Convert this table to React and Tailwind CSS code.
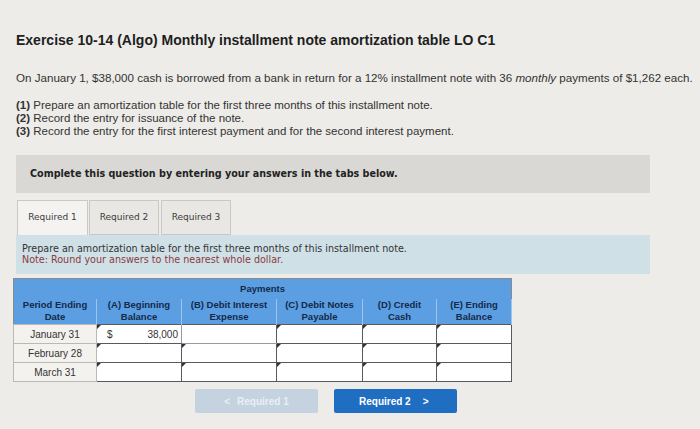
const HEAD = ['(A) Beginning|Balance', '(B) Debit Interest|Expense', '(C) Debit Notes|Payable', '(D) Credit|Cash', '(E) Ending|Balance'];
const WIDTHS = ['w-[85px]', 'w-[95px]', 'w-[86px]', 'w-[74px]', 'w-[75px]'];
const ROWS = ['January 31', 'February 28', 'March 31'];

function Marker() {
  return <span className="absolute top-0 left-0 w-0 h-0 border-t-[4px] border-r-[4px] border-t-[#2b3440] border-r-transparent" />;
}

function InputCell({ row, col }) {
  const first = row === 0 && col === 0;
  const focus = row === 0 && col === 1;
  return (
    <td className={`relative bg-white border-[1.5px] border-[#5a5a5a] p-0 ${focus ? 'border-b-[#9a9a9a] border-b-dotted' : ''} ${first ? 'border-r-dotted border-r-[#9a9a9a]' : ''}`}>
      {!focus && <Marker />}
      {first && (
        <div className="flex justify-between items-center px-[10px] pr-[3px] text-[10px] text-[#333]">
          <span>$</span>
          <span>38,000</span>
        </div>
      )}
    </td>
  );
}

export default function App() {
  return (
    <div className="w-[700px] h-[429px] overflow-hidden bg-[#edece8] font-['Liberation_Sans',Arial,sans-serif] text-[#2a2a2a]">
      <div className="pl-[16px] pt-[31px]">
        <h1 className="text-[14px] leading-[18px] font-bold text-[#1e1e1e]">
          Exercise 10-14 (Algo) Monthly installment note amortization table LO C1
        </h1>
        <p className="mt-[22px] text-[11.6px] leading-[14px] text-[#333]">
          On January 1, $38,000 cash is borrowed from a bank in return for a 12% installment note with 36 <i>monthly</i> payments of $1,262 each.
        </p>
        <div className="mt-[14px] text-[11.5px] leading-[13px] text-[#333]">
          <p><b>(1)</b> Prepare an amortization table for the first three months of this installment note.</p>
          <p><b>(2)</b> Record the entry for issuance of the note.</p>
          <p><b>(3)</b> Record the entry for the first interest payment and for the second interest payment.</p>
        </div>
      </div>

      <div className="ml-[16px] w-[634px] mt-[17px] h-[38px] bg-[#d9d8d5] flex items-center pl-[14px] font-['DejaVu_Sans',sans-serif] font-bold text-[9.6px] text-[#222]">
        Complete this question by entering your answers in the tabs below.
      </div>

      <div className="ml-[17px] mt-[7px] flex gap-[1px] font-['DejaVu_Sans',sans-serif] text-[9px] text-[#3a3a3a]">
        <div className="w-[71px] h-[35px] bg-[#f4f3f1] border border-b-0 border-[#c9c8c5] flex items-center justify-center">Required 1</div>
        <div className="w-[70px] h-[35px] bg-[#e8e7e4] border border-[#c9c8c5] flex items-center justify-center">Required 2</div>
        <div className="ml-[1px] w-[70px] h-[35px] bg-[#e8e7e4] border border-[#c9c8c5] flex items-center justify-center">Required 3</div>
      </div>

      <div className="ml-[16px] w-[634px] h-[39px] bg-[#d0e0e7] pl-[6px] pt-[8px] font-['DejaVu_Sans',sans-serif] text-[9.6px] leading-[11px]">
        <p className="text-[#333]">Prepare an amortization table for the first three months of this installment note.</p>
        <p className="text-[#8a3c3c]">Note: Round your answers to the nearest whole dollar.</p>
      </div>

      <table className="ml-[13px] mt-[4px] border-collapse table-fixed border border-[#8a8a8a]">
        <thead>
          <tr className="bg-[#5b9ee1]">
            <th colSpan={6} className="h-[20px] p-0 text-[9.5px] font-bold text-[#15294a] text-center">Payments</th>
          </tr>
          <tr className="bg-[#5b9ee1]">
            <th className="w-[83px] h-[26px] p-0 text-[9.5px] leading-[12px] font-bold text-[#15294a] border-r border-[#9cc4ec]">Period Ending<br />Date</th>
            {HEAD.map((h, i) => (
              <th key={i} className={`${WIDTHS[i]} h-[26px] p-0 text-[9.5px] leading-[12px] font-bold text-[#15294a] border-r border-[#9cc4ec]`}>
                {h.split('|')[0]}<br />{h.split('|')[1]}
              </th>
            ))}
          </tr>
        </thead>
        <tbody>
          {ROWS.map((r, ri) => (
            <tr key={r} className="h-[19px]">
              <td className="bg-[#f3f2ef] border border-[#b9b9b7] text-center text-[10px] text-[#333] p-0">{r}</td>
              {[0, 1, 2, 3, 4].map(ci => <InputCell key={ci} row={ri} col={ci} />)}
            </tr>
          ))}
        </tbody>
      </table>

      <div className="ml-[195px] mt-[7px] flex gap-[16px]">
        <div className="w-[123px] h-[24px] bg-[#c4d3df] rounded-[2px] flex items-center justify-center text-[10px] font-bold text-[#e9eff4]">
          <span className="mr-[7px]">&lt;</span>Required 1
        </div>
        <div className="w-[123px] h-[24px] bg-[#1f6ec2] rounded-[2px] flex items-center pl-[25px] text-[10px] font-bold text-white">
          Required 2<span className="ml-[12px]">&gt;</span>
        </div>
      </div>
    </div>
  );
}
